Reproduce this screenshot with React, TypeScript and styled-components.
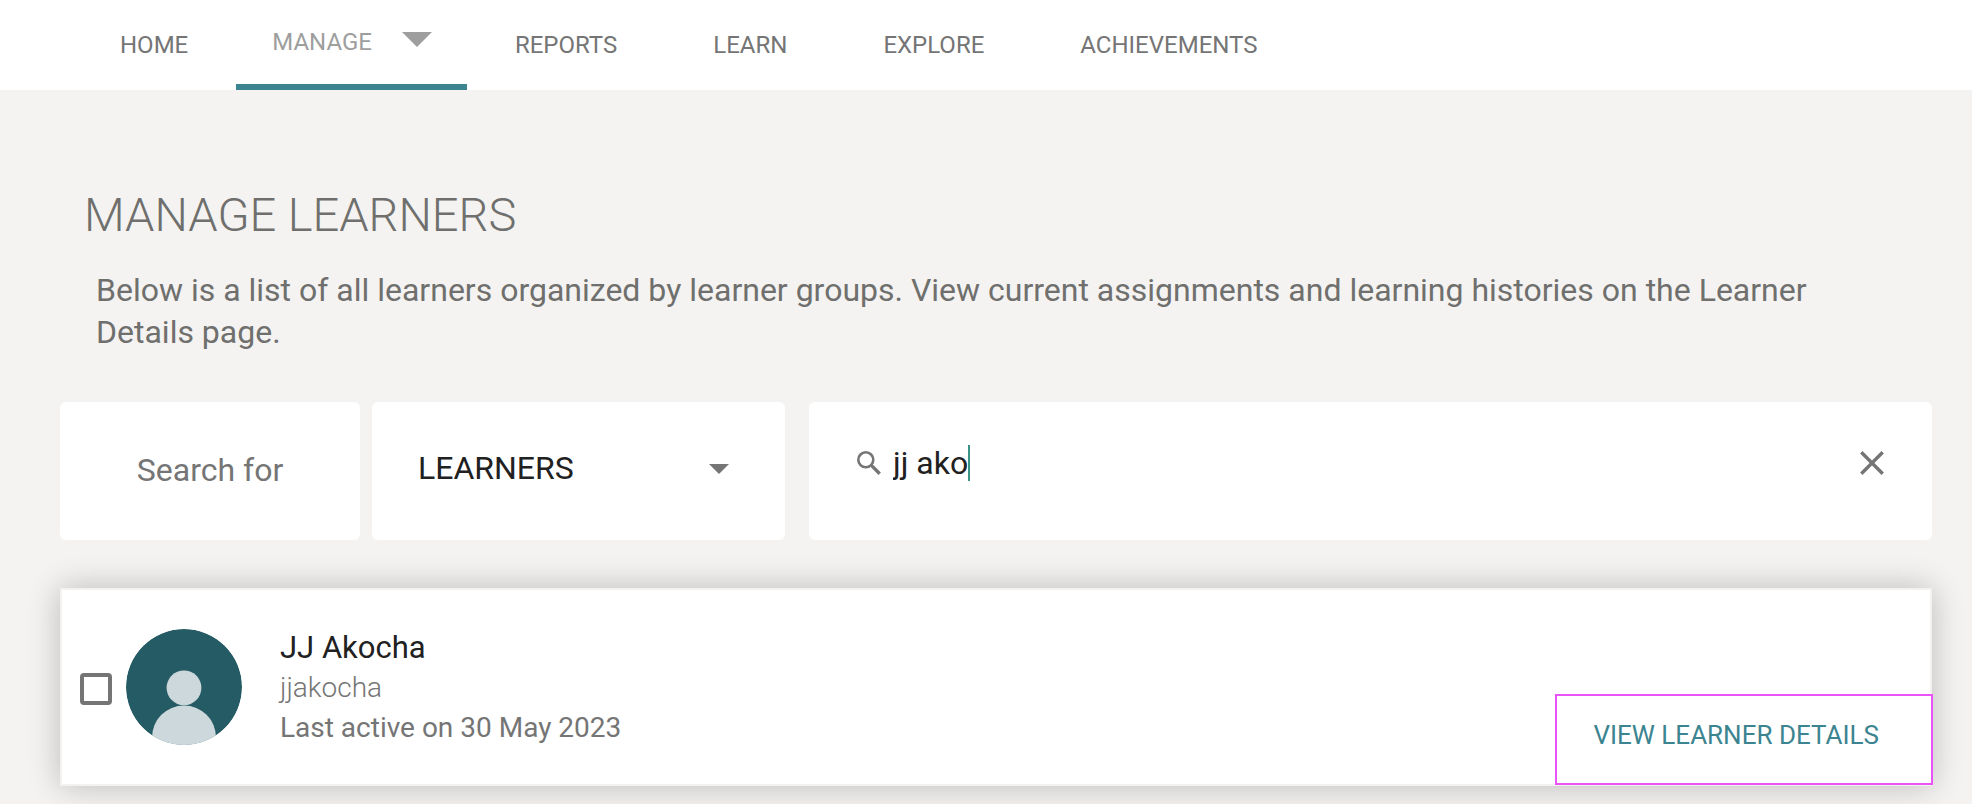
import React, { useState } from "react";
import styled, { createGlobalStyle } from "styled-components";

const colors = {
  page: "#f4f3f1",
  teal: "#3c8490",
  darkTeal: "#255b64",
  text: "#212121",
  heading: "#6f6f6d",
  muted: "#757575",
  faded: "#9e9e9e",
};

const GlobalStyle = createGlobalStyle`
  *, *::before, *::after { box-sizing: border-box; }
  body {
    margin: 0;
    min-height: 100vh;
    background: ${colors.page};
    color: ${colors.text};
    font-family: Roboto, "Liberation Sans", sans-serif;
  }
  button, input, select { font: inherit; color: inherit; }
`;

const NavBar = styled.nav`
  display: flex;
  height: 90px;
  padding-left: 72px;
  background: #fff;
  font-size: 24px;
`;

const NavLink = styled.a`
  display: flex;
  align-items: center;
  padding: 0 48px;
  color: ${colors.muted};
  text-decoration: none;
`;

const NavMenu = styled.button`
  display: flex;
  align-items: center;
  gap: 30px;
  padding: 0 35px 0 36px;
  border: 0;
  border-bottom: 6px solid ${colors.teal};
  background: none;
  color: ${colors.faded};
  cursor: pointer;
`;

const Page = styled.main`
  padding: 97px 40px 40px 60px;
`;

const Title = styled.h1`
  margin: 0 24px 26px;
  color: ${colors.heading};
  font-size: 47px;
  font-weight: 300;
  line-height: 56px;
`;

const Intro = styled.p`
  margin: 0 100px 49px 36px;
  color: ${colors.heading};
  font-size: 32px;
  line-height: 42px;
`;

const SearchBar = styled.form`
  display: flex;
  gap: 24px;
  margin-bottom: 48px;
  font-size: 32px;
`;

const ScopeGroup = styled.div`
  display: flex;
  gap: 12px;
`;

const Tile = styled.div`
  min-height: 138px;
  border-radius: 6px;
  background: #fff;
`;

const ScopeLabel = styled(Tile).attrs({ as: "label" })<{ htmlFor?: string }>`
  display: flex;
  align-items: center;
  justify-content: center;
  width: 300px;
  padding-bottom: 2px;
  color: ${colors.muted};
`;

const ScopeTile = styled(Tile)`
  display: grid;
  align-items: center;
  width: 413px;
  padding-bottom: 4px;

  > * { grid-area: 1 / 1; }
  > svg { justify-self: end; margin-right: 56px; pointer-events: none; }
`;

const ScopeSelect = styled.select`
  width: 100%;
  height: 100%;
  padding: 0 76px 2px 46px;
  border: 0;
  background: none;
  appearance: none;
  outline: none;
`;

const QueryTile = styled(Tile)`
  display: flex;
  align-items: center;
  flex: 1;
  padding: 0 48px 16px;
`;

const QueryField = styled.label`
  display: flex;
  align-items: center;
  flex: 1;
  min-width: 0;
  cursor: text;

  > svg { margin-right: 12px; }
`;

const QueryInput = styled.input`
  field-sizing: content;
  height: 40px;
  padding: 0;
  border: 0;
  background: none;
  caret-color: transparent;
  outline: none;
`;

const Caret = styled.span`
  width: 2px;
  height: 36px;
  background: #3b9286;
`;

const ClearButton = styled.button`
  display: flex;
  padding: 0;
  border: 0;
  background: none;
  cursor: pointer;
`;

const LearnerCard = styled.article`
  display: flex;
  align-items: center;
  padding-left: 18px;
  border: 2px solid #f3f2f0;
  background: #fff;
  box-shadow: 0 0 30px rgba(0, 0, 0, 0.24);
`;

const Checkbox = styled.input`
  width: 32px;
  height: 32px;
  margin: 4px 14px 0 0;
  border: 4px solid ${colors.muted};
  border-radius: 4px;
  appearance: none;
  &:checked { background: ${colors.teal}; }
`;

const LearnerInfo = styled.div`
  flex: 1;
  padding: 38px 38px 36px;
  font-size: 28px;
  line-height: 40px;
`;

const LearnerName = styled.h2`
  margin: 0;
  font-size: 31px;
  font-weight: 400;
`;

const LearnerMeta = styled.p<{ $light?: boolean }>`
  margin: 0;
  color: ${colors.muted};
  font-weight: ${(p) => (p.$light ? 300 : 400)};
`;

const DetailsLink = styled.a`
  align-self: flex-end;
  margin: 0 -3px -1px 0;
  padding: 24px 52px 33px 36px;
  border: 2px solid #ea54f7;
  background: #fff;
  color: ${colors.teal};
  font-size: 26px;
  line-height: 30px;
  text-decoration: none;
`;

const MenuArrow = () => (
  <svg width="30" height="20" viewBox="0 0 30 20" aria-hidden="true">
    <path d="M0 0H30L15 15Z" fill={colors.faded} />
  </svg>
);

const SelectArrow = () => (
  <svg width="20" height="10" viewBox="0 0 20 10" aria-hidden="true">
    <path d="M0 0H20L10 10Z" fill={colors.muted} />
  </svg>
);

const SearchIcon = () => (
  <svg width="24" height="24" viewBox="0 0 24 24" fill="none" stroke={colors.muted} aria-hidden="true">
    <circle cx="8.8" cy="8.8" r="7.5" strokeWidth="2.6" />
    <path d="M14.2 14.2L16 16" strokeWidth="2.8" />
    <path d="M15.4 15.4L22.7 22.7" strokeWidth="3.4" />
  </svg>
);

const ClearIcon = () => (
  <svg width="24" height="24" viewBox="0 0 24 24" fill="none" stroke={colors.muted} strokeWidth="3.4" aria-hidden="true">
    <path d="M1.3 1.3L22.7 22.7M22.7 1.3L1.3 22.7" />
  </svg>
);

const Avatar = () => (
  <svg width="116" height="116" viewBox="0 0 116 116" role="img" aria-label="Learner avatar">
    <defs>
      <clipPath id="avatar-clip">
        <circle cx="58" cy="58" r="58" />
      </clipPath>
    </defs>
    <g clipPath="url(#avatar-clip)">
      <circle cx="58" cy="58" r="58" fill={colors.darkTeal} />
      <circle cx="58" cy="58.8" r="17.4" fill="#cdd8dd" />
      <path d="M26 116V108.5A32 32 0 0 1 90 108.5V116Z" fill="#cdd8dd" />
    </g>
  </svg>
);

export default function App() {
  const [query, setQuery] = useState("jj ako");

  return (
    <>
      <GlobalStyle />
      <NavBar>
        <NavLink href="#home">HOME</NavLink>
        <NavMenu type="button" aria-haspopup="menu">
          MANAGE
          <MenuArrow />
        </NavMenu>
        <NavLink href="#reports">REPORTS</NavLink>
        <NavLink href="#learn">LEARN</NavLink>
        <NavLink href="#explore">EXPLORE</NavLink>
        <NavLink href="#achievements">ACHIEVEMENTS</NavLink>
      </NavBar>
      <Page>
        <Title>MANAGE LEARNERS</Title>
        <Intro>
          Below is a list of all learners organized by learner groups. View current assignments and
          learning histories on the Learner Details page.
        </Intro>
        <SearchBar onSubmit={(e) => e.preventDefault()}>
          <ScopeGroup>
            <ScopeLabel htmlFor="scope">Search for</ScopeLabel>
            <ScopeTile>
              <ScopeSelect id="scope" defaultValue="learners">
                <option value="learners">LEARNERS</option>
              </ScopeSelect>
              <SelectArrow />
            </ScopeTile>
          </ScopeGroup>
          <QueryTile>
            <QueryField>
              <SearchIcon />
              <QueryInput
                type="text"
                aria-label="Search learners"
                value={query}
                onChange={(e) => setQuery(e.target.value)}
              />
              <Caret />
            </QueryField>
            <ClearButton type="button" aria-label="Clear search" onClick={() => setQuery("")}>
              <ClearIcon />
            </ClearButton>
          </QueryTile>
        </SearchBar>
        <LearnerCard>
          <Checkbox type="checkbox" aria-label="Select JJ Akocha" />
          <Avatar />
          <LearnerInfo>
            <LearnerName>JJ Akocha</LearnerName>
            <LearnerMeta $light>jjakocha</LearnerMeta>
            <LearnerMeta>Last active on 30 May 2023</LearnerMeta>
          </LearnerInfo>
          <DetailsLink href="#details">VIEW LEARNER DETAILS</DetailsLink>
        </LearnerCard>
      </Page>
    </>
  );
}
